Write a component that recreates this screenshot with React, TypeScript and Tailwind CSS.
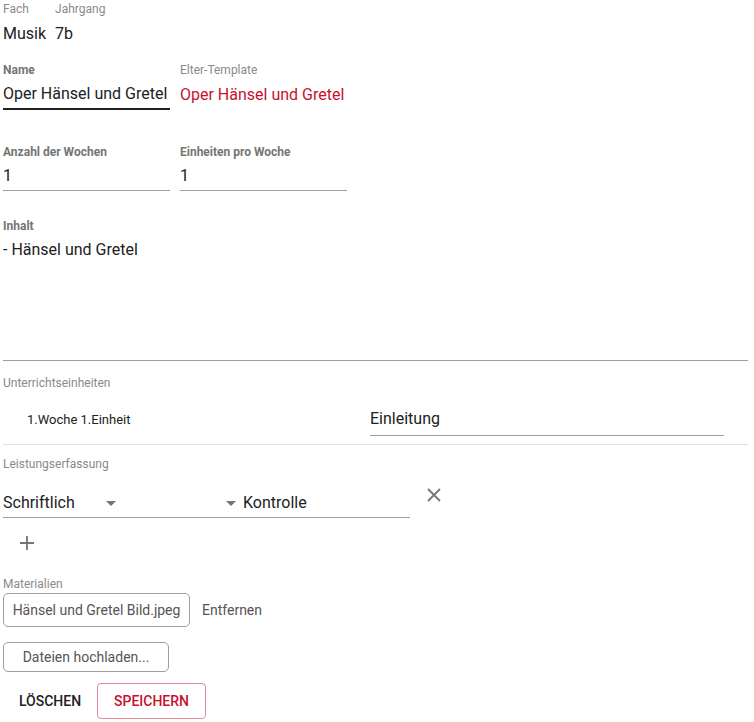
import React from 'react';

const font = { fontFamily: 'Roboto, "Noto Sans", sans-serif' };

const BoldLabel: React.FC<{ children: React.ReactNode }> = ({ children }) => (
  <div className="text-[12px] font-bold leading-[14px] text-[#757575]">{children}</div>
);

const Caret = () => (
  <svg width="10" height="5" viewBox="0 0 10 5" className="fill-[#757575]">
    <path d="M0 0 L10 0 L5 5 Z" />
  </svg>
);

export default function App() {
  return (
    <div className="bg-white text-[#212121] px-[3px] pt-[1px] min-h-[722px]" style={font}>
      {/* Fach / Jahrgang */}
      <div className="flex gap-[9px]">
        <div>
          <div className="text-[12px] leading-[16px] text-[#8a8a8a]">Fach</div>
          <div className="mt-[7px] text-[16px] leading-[20px]">Musik</div>
        </div>
        <div>
          <div className="text-[12px] leading-[16px] text-[#8a8a8a]">Jahrgang</div>
          <div className="mt-[7px] text-[16px] leading-[20px]">7b</div>
        </div>
      </div>

      {/* Name / Elter-Template */}
      <div className="mt-[19px] flex gap-[10px]">
        <div className="w-[167px]">
          <BoldLabel>Name</BoldLabel>
          <div className="mt-[6px] pb-[3px] border-b-2 border-[#212121] text-[16px] leading-[22px] whitespace-nowrap">
            Oper Hänsel und Gretel
          </div>
        </div>
        <div>
          <div className="text-[12px] leading-[14px] text-[#8a8a8a]">Elter-Template</div>
          <div className="mt-[7px] text-[16px] leading-[22px] text-[#c8102e]">Oper Hänsel und Gretel</div>
        </div>
      </div>

      {/* Wochen / Einheiten */}
      <div className="mt-[35px] flex gap-[10px]">
        <div className="w-[167px]">
          <BoldLabel>Anzahl der Wochen</BoldLabel>
          <div className="mt-[6px] pb-[3px] border-b border-[#9e9e9e] text-[16px] leading-[22px]">1</div>
        </div>
        <div className="w-[167px]">
          <BoldLabel>Einheiten pro Woche</BoldLabel>
          <div className="mt-[6px] pb-[3px] border-b border-[#9e9e9e] text-[16px] leading-[22px]">1</div>
        </div>
      </div>

      {/* Inhalt */}
      <div className="mt-[28px] w-[745px]">
        <BoldLabel>Inhalt</BoldLabel>
        <div className="mt-[6px] h-[122px] border-b border-[#9e9e9e] text-[16px] leading-[22px]">- Hänsel und Gretel</div>
      </div>

      {/* Unterrichtseinheiten */}
      <div className="mt-[15px] text-[12px] leading-[14px] text-[#8a8a8a]">Unterrichtseinheiten</div>
      <div className="mt-[18px] w-[745px] flex items-end border-b border-[#e0e0e0] pb-[8px]">
        <div className="w-[367px] pl-[24px] pb-[8px] text-[13px] leading-[16px]">1.Woche 1.Einheit</div>
        <div className="w-[354px] pb-[5px] border-b border-[#9e9e9e] text-[16px] leading-[22px]">Einleitung</div>
      </div>

      {/* Leistungserfassung */}
      <div className="mt-[12px] text-[12px] leading-[14px] text-[#8a8a8a]">Leistungserfassung</div>
      <div className="mt-[21px] flex items-start">
        <div className="w-[407px] flex items-center border-b border-[#9e9e9e] pb-[3px] text-[16px] leading-[22px]">
          <div className="w-[223px] flex items-center">
            <span className="w-[103px]">Schriftlich</span>
            <Caret />
          </div>
          <Caret />
          <span className="ml-[7px]">Kontrolle</span>
        </div>
        <svg width="14" height="14" viewBox="0 0 14 14" className="ml-[17px] mt-[-4px] stroke-[#757575]" strokeWidth="1.8">
          <path d="M1 1 L13 13 M13 1 L1 13" />
        </svg>
      </div>
      <svg width="14" height="14" viewBox="0 0 14 14" className="ml-[17px] mt-[18px] stroke-[#757575]" strokeWidth="1.8">
        <path d="M7 0 V14 M0 7 H14" />
      </svg>

      {/* Materialien */}
      <div className="mt-[27px] text-[12px] leading-[14px] text-[#8a8a8a]">Materialien</div>
      <div className="mt-[2px] flex items-center">
        <div className="h-[34px] w-[187px] rounded-[5px] border border-[#9e9e9e] flex items-center justify-center text-[14px] text-[#555]">
          Hänsel und Gretel Bild.jpeg
        </div>
        <span className="ml-[12px] text-[14px] text-[#555]">Entfernen</span>
      </div>
      <div className="mt-[15px] h-[30px] w-[166px] rounded-[5px] border border-[#9e9e9e] flex items-center justify-center text-[14px] text-[#555]">
        Dateien hochladen...
      </div>

      {/* Buttons */}
      <div className="mt-[11px] flex items-center">
        <button className="w-[94px] h-[36px] text-[14px] font-medium text-[#212121]">LÖSCHEN</button>
        <button className="h-[36px] w-[109px] rounded-[4px] border border-[#e08a9c] text-[14px] font-medium text-[#c8102e]">
          SPEICHERN
        </button>
      </div>
    </div>
  );
}
